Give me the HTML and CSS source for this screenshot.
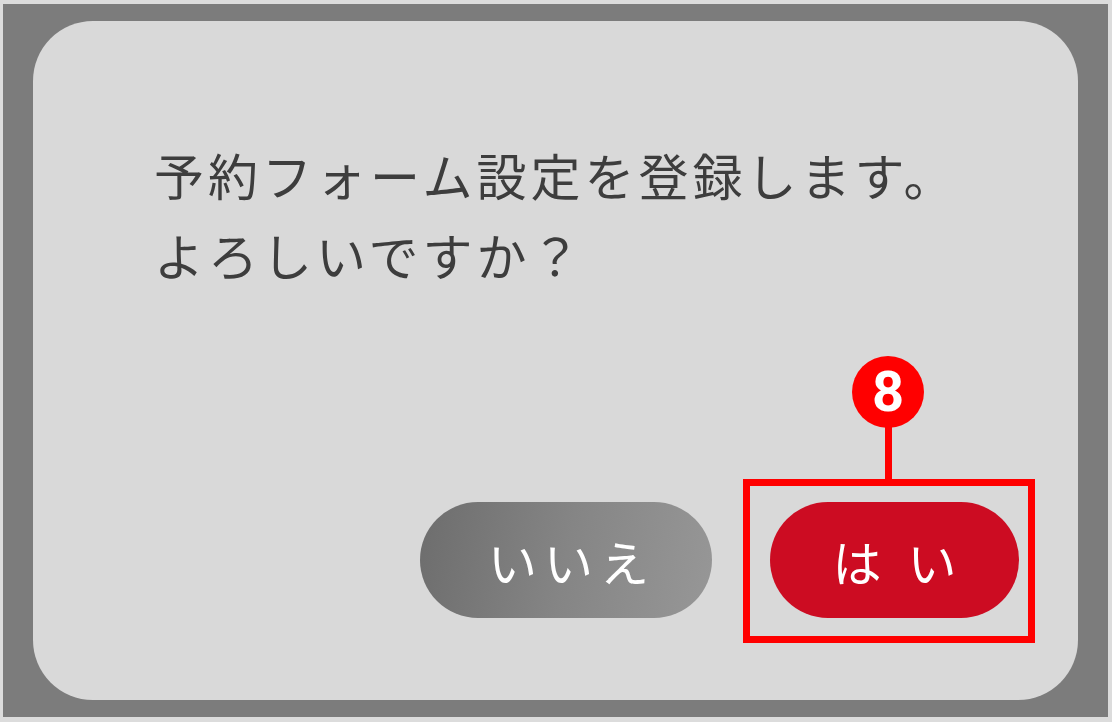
FILE: index.html
```html
<!DOCTYPE html>
<html lang="ja">
<head>
<meta charset="utf-8">
<title>確認</title>
<link rel="stylesheet" href="styles.css">
</head>
<body>
<div class="frame">
  <div class="dialog">
    <p class="message">予約フォーム設定を登録します。<br>よろしいですか？</p>
    <div class="actions">
      <button class="btn btn-no">いいえ</button>
      <div class="yes-wrap">
        <button class="btn btn-yes">はい</button>
        <div class="callout-box"></div>
        <div class="callout-line"></div>
        <div class="callout-badge">8</div>
      </div>
    </div>
  </div>
</div>
</body>
</html>
```

FILE: styles.css
```css
html, body {
  margin: 0;
  padding: 0;
}
body {
  width: 1112px;
  height: 722px;
  background: #dcdcdc;
  box-sizing: border-box;
  padding: 4px 4px 5px 3px;
  font-family: "Noto Sans CJK JP", "Noto Sans", sans-serif;
}
.frame {
  height: 100%;
  box-sizing: border-box;
  background: #7c7c7c;
  padding: 17px 30px 17px 30px;
}
.dialog {
  height: 100%;
  box-sizing: border-box;
  background: #d9d9d9;
  border-radius: 60px;
  display: flex;
  flex-direction: column;
  padding: 113px 59px 82px 121px;
}
.message {
  margin: 0;
  font-size: 50px;
  line-height: 80px;
  letter-spacing: 4px;
  color: #3d3d3d;
  font-weight: 400;
}
.actions {
  margin-top: auto;
  display: flex;
  justify-content: flex-end;
  gap: 58px;
}
.btn {
  height: 116px;
  border: none;
  border-radius: 58px;
  color: #fff;
  font-family: "Noto Sans CJK JP", "Noto Sans", sans-serif;
  font-size: 49px;
  font-weight: 400;
  padding: 0;
  display: flex;
  align-items: center;
  justify-content: center;
}
.btn-no {
  width: 292px;
  background: linear-gradient(100deg, #6d6d6d 0%, #858585 50%, #979797 100%);
  letter-spacing: 7px;
  padding-left: 12px;
}
.yes-wrap {
  position: relative;
}
.btn-yes {
  width: 249px;
  background: #cc0c22;
  letter-spacing: 26px;
  padding-left: 26px;
}
.callout-box {
  position: absolute;
  left: -27px;
  top: -23px;
  width: 292px;
  height: 164px;
  box-sizing: border-box;
  border: 7px solid #ff0000;
}
.callout-line {
  position: absolute;
  left: 115px;
  top: -75px;
  width: 7px;
  height: 54px;
  background: #ff0000;
}
.callout-badge {
  position: absolute;
  left: 82px;
  top: -146px;
  width: 72px;
  height: 72px;
  border-radius: 50%;
  background: #ff0000;
  color: #fff;
  font-family: "Roboto", "DejaVu Sans", sans-serif;
  font-weight: 700;
  font-size: 56px;
  line-height: 72px;
  text-align: center;
}
```
